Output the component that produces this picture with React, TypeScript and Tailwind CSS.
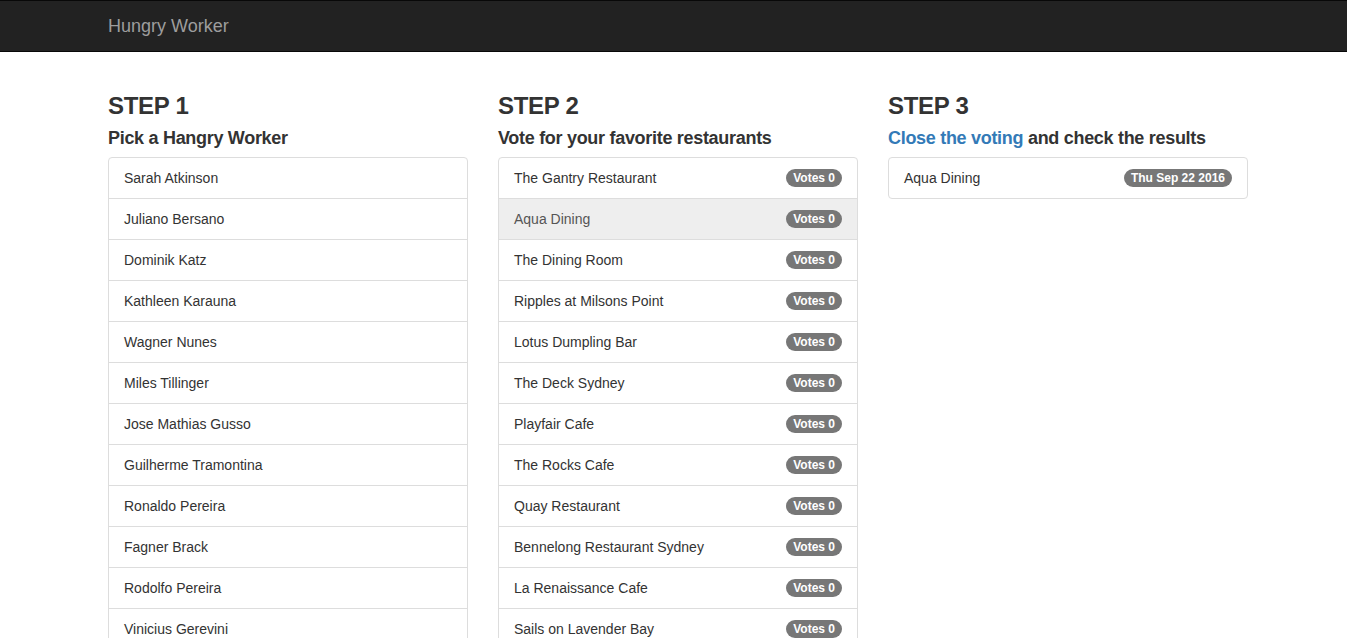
import React from "react";

const workers = [
  "Sarah Atkinson",
  "Juliano Bersano",
  "Dominik Katz",
  "Kathleen Karauna",
  "Wagner Nunes",
  "Miles Tillinger",
  "Jose Mathias Gusso",
  "Guilherme Tramontina",
  "Ronaldo Pereira",
  "Fagner Brack",
  "Rodolfo Pereira",
  "Vinicius Gerevini",
];

const restaurants = [
  "The Gantry Restaurant",
  "Aqua Dining",
  "The Dining Room",
  "Ripples at Milsons Point",
  "Lotus Dumpling Bar",
  "The Deck Sydney",
  "Playfair Cafe",
  "The Rocks Cafe",
  "Quay Restaurant",
  "Bennelong Restaurant Sydney",
  "La Renaissance Cafe",
  "Sails on Lavender Bay",
];

function Badge({ children }: { children: React.ReactNode }) {
  return (
    <span className="inline-block rounded-[10px] bg-[#777] px-[7px] py-[3px] text-[12px] font-bold leading-[12px] text-white whitespace-nowrap">
      {children}
    </span>
  );
}

function Item({
  children,
  badge,
  first,
  last,
  active,
}: {
  children: React.ReactNode;
  badge?: React.ReactNode;
  first?: boolean;
  last?: boolean;
  active?: boolean;
}) {
  return (
    <div
      className={
        "flex items-center justify-between border border-[#ddd] px-[15px] py-[10px] text-[14px] leading-[20px] -mb-px " +
        (first ? "rounded-t-[4px] " : "") +
        (last ? "rounded-b-[4px] " : "") +
        (active ? "bg-[#eee] text-[#555]" : "bg-white text-[#333]")
      }
    >
      <span>{children}</span>
      {badge ? <Badge>{badge}</Badge> : null}
    </div>
  );
}

export default function App() {
  return (
    <div
      className="min-h-[638px] bg-white text-[#333]"
      style={{ fontFamily: '"Liberation Sans", Arial, Helvetica, sans-serif' }}
    >
      <nav className="h-[52px] border-t border-b border-[#080808] bg-[#222]">
        <div className="pl-[108px] pt-[15px] text-[18px] leading-[20px] text-[#9d9d9d]">
          Hungry Worker
        </div>
      </nav>
      <div className="ml-[108px] mt-[19px] flex gap-[30px]">
        <div className="w-[360px]">
          <h3 className="mt-[22px] text-[24px] font-bold leading-[26px] tracking-[-0.3px]">STEP 1</h3>
          <h4 className="mt-[9px] mb-[9px] text-[18px] font-bold leading-[20px] tracking-[-0.3px]">
            Pick a Hangry Worker
          </h4>
          <div>
            {workers.map((w, i) => (
              <Item key={w} first={i === 0}>
                {w}
              </Item>
            ))}
          </div>
        </div>
        <div className="w-[360px]">
          <h3 className="mt-[22px] text-[24px] font-bold leading-[26px] tracking-[-0.3px]">STEP 2</h3>
          <h4 className="mt-[9px] mb-[9px] text-[18px] font-bold leading-[20px] tracking-[-0.3px]">
            Vote for your favorite restaurants
          </h4>
          <div>
            {restaurants.map((r, i) => (
              <Item key={r} first={i === 0} active={i === 1} badge="Votes 0">
                {r}
              </Item>
            ))}
          </div>
        </div>
        <div className="w-[360px]">
          <h3 className="mt-[22px] text-[24px] font-bold leading-[26px] tracking-[-0.3px]">STEP 3</h3>
          <h4 className="mt-[9px] mb-[9px] text-[18px] font-bold leading-[20px] tracking-[-0.3px]">
            <a className="text-[#337ab7]">Close the voting</a> and check the results
          </h4>
          <div>
            <Item first last badge="Thu Sep 22 2016">
              Aqua Dining
            </Item>
          </div>
        </div>
      </div>
    </div>
  );
}
